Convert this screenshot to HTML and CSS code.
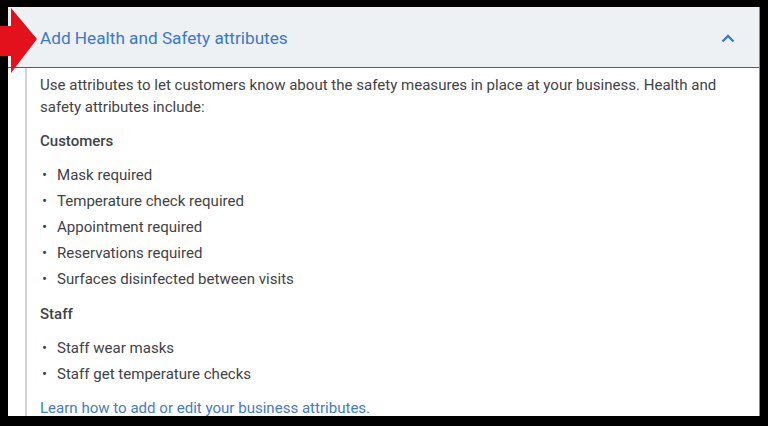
FILE: index.html
```html
<!DOCTYPE html>
<html>
<head>
	<meta charset="utf-8">
	<title>Health and Safety attributes</title>
	<link rel="stylesheet" href="styles.css">
</head>
<body>
	<div class="panel">
		<div class="header">
			<span class="header_title">Add Health and Safety attributes</span>
			<svg class="chevron" width="14" height="9" viewBox="0 0 14 9"><path d="M1.5 7.5 L7 2 L12.5 7.5" fill="none" stroke="#3a78d0" stroke-width="2.4"/></svg>
		</div>
		<div class="content">
			<p class="intro">Use attributes to let customers know about the safety measures in place at your business. Health and safety attributes include:</p>
			<h4>Customers</h4>
			<ul>
				<li>Mask required</li>
				<li>Temperature check required</li>
				<li>Appointment required</li>
				<li>Reservations required</li>
				<li>Surfaces disinfected between visits</li>
			</ul>
			<h4>Staff</h4>
			<ul>
				<li>Staff wear masks</li>
				<li>Staff get temperature checks</li>
			</ul>
			<a class="learn" href="#">Learn how to add or edit your business attributes.</a>
		</div>
	</div>
	<!-- red pointer over the header -->
	<svg class="arrow" width="40" height="70" viewBox="0 0 40 70"><polygon points="0,18 11,18 11,0 37,31 11,65 11,48 0,48" fill="#e3111b"/></svg>
</body>
</html>
```

FILE: styles.css
```css
body,ul,li,p,h4,div{margin:0;padding:0;}
li{list-style: none;}
a{text-decoration:none;}
body{background:#000;font-family: Roboto, "Liberation Sans", sans-serif;color:#3f4246;position: relative;height: 426px;overflow: hidden;}
.panel{margin: 7px 8px 0 8px;width: 751px;height: 409px;background:#fff;border-right: 1px solid #8a8a8a;overflow: hidden;}
.header{height: 60px;background:#eef1f4;border-bottom: 1px solid #5a5a5a;display: flex;align-items: center;justify-content: space-between;padding: 0 24px 0 32px;}
.header_title{font-size: 17.2px;color:#3a78d0;margin-top: 2px;}
.chevron{display: block;margin-top: 2px;}
.content{margin-left: 17px;border-left: 2px solid #d4d4d4;padding: 6px 0 0 13px;height: 400px;font-size: 15.05px;}
.intro{line-height: 22px;width: 690px;}
h4{font-size: 15px;font-weight: 500;line-height: 22px;margin-top: 12px;}
ul{margin-top: 10px;}
li{line-height: 26px;position: relative;padding-left: 17px;}
li:before{content: "•";position: absolute;left: 2px;top: 0;font-size: 15px;}
ul + h4{margin-top: 11px;}
.learn{display: block;margin-top: 10px;line-height: 22px;color:#3f7bcc;}
.arrow{position: absolute;left: 0;top: 8px;}
```
